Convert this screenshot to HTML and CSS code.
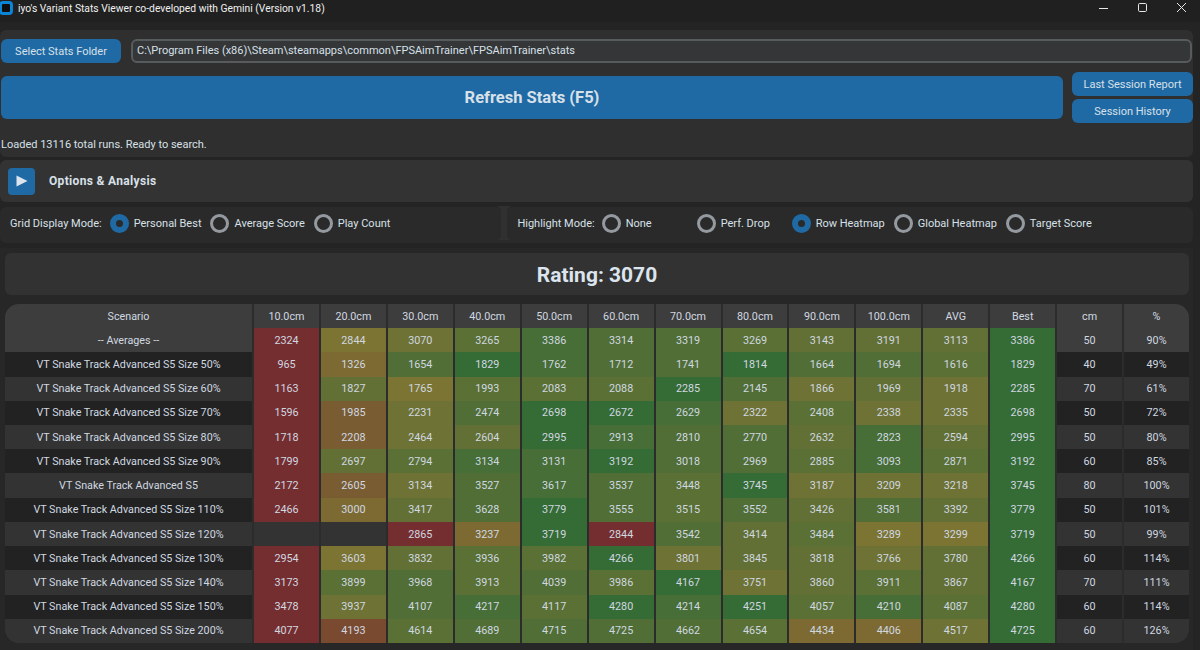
FILE: index.html
```html
<!DOCTYPE html>
<html lang="en">
<head>
<meta charset="utf-8">
<title>iyo's Variant Stats Viewer</title>
<link rel="stylesheet" href="styles.css">
</head>
<body>
<header class="titlebar">
  <div class="title-left"><span class="app-icon"></span><span class="app-title">iyo's Variant Stats Viewer co-developed with Gemini (Version v1.18)</span></div>
  <div class="win-controls">
    <svg class="win-btn" width="12" height="12" viewBox="0 0 12 12"><path d="M1 6.5H10" stroke="#e8e8e8" fill="none"/></svg>
    <svg class="win-btn" width="12" height="12" viewBox="0 0 12 12"><rect x="1.5" y="1.5" width="8" height="8" rx="1.2" stroke="#e8e8e8" fill="none"/></svg>
    <svg class="win-btn" width="12" height="12" viewBox="0 0 12 12"><path d="M1 1L10 10M10 1L1 10" stroke="#e8e8e8" fill="none"/></svg>
  </div>
</header>
<section class="panel top-panel">
  <div class="folder-row">
    <button class="btn folder-btn">Select Stats Folder</button>
    <div class="path-entry">C:\Program Files (x86)\Steam\steamapps\common\FPSAimTrainer\FPSAimTrainer\stats</div>
  </div>
  <div class="action-row">
    <button class="btn refresh-btn">Refresh Stats (F5)</button>
    <div class="side-btns">
      <button class="btn side-btn">Last Session Report</button>
      <button class="btn side-btn">Session History</button>
    </div>
  </div>
  <div class="status">Loaded 13116 total runs. Ready to search.</div>
</section>
<section class="options-panel">
  <button class="toggle"><svg width="12" height="12" viewBox="0 0 12 12"><path d="M0.5 0.5L11.5 6L0.5 11.5Z" fill="#dce4ee"/></svg></button>
  <span class="options-title">Options &amp; Analysis</span>
</section>
<section class="radio-row">
  <span class="group-label first">Grid Display Mode:</span>
  <label class="radio on"><i></i>Personal Best</label>
  <label class="radio"><i></i>Average Score</label>
  <label class="radio"><i></i>Play Count</label>
  <svg class="divider" width="14" height="34" viewBox="0 0 14 34"><path d="M0 0H14L10 3V31L14 34H0L4 31V3Z" fill="#303030"/></svg>
  <span class="group-label">Highlight Mode:</span>
  <label class="radio wide"><i></i>None</label>
  <label class="radio wide"><i></i>Perf. Drop</label>
  <label class="radio on"><i></i>Row Heatmap</label>
  <label class="radio"><i></i>Global Heatmap</label>
  <label class="radio"><i></i>Target Score</label>
</section>
<main class="results">
  <div class="rating">Rating: 3070</div>
  <div class="grid">
    <div class="c hd">Scenario</div><div class="c hd">10.0cm</div><div class="c hd">20.0cm</div><div class="c hd">30.0cm</div><div class="c hd">40.0cm</div><div class="c hd">50.0cm</div><div class="c hd">60.0cm</div><div class="c hd">70.0cm</div><div class="c hd">80.0cm</div><div class="c hd">90.0cm</div><div class="c hd">100.0cm</div><div class="c hd">AVG</div><div class="c hd">Best</div><div class="c hd">cm</div><div class="c hd">%</div>

    <div class="c hd">-- Averages --</div><div class="c h0">2324</div><div class="c h4">2844</div><div class="c h5">3070</div><div class="c h7">3265</div><div class="c h9">3386</div><div class="c h8">3314</div><div class="c h8">3319</div><div class="c h7">3269</div><div class="c h6">3143</div><div class="c h6">3191</div><div class="c h6">3113</div><div class="c h10">3386</div><div class="c hd">50</div><div class="c hd">90%</div>

    <div class="c dk">VT Snake Track Advanced S5 Size 50%</div><div class="c h0">965</div><div class="c h3">1326</div><div class="c h8">1654</div><div class="c h10">1829</div><div class="c h9">1762</div><div class="c h8">1712</div><div class="c h8">1741</div><div class="c h10">1814</div><div class="c h8">1664</div><div class="c h8">1694</div><div class="c h7">1616</div><div class="c h10">1829</div><div class="c dk">40</div><div class="c dk">49%</div>

    <div class="c lt">VT Snake Track Advanced S5 Size 60%</div><div class="c h0">1163</div><div class="c h6">1827</div><div class="c h4">1765</div><div class="c h7">1993</div><div class="c h7">2083</div><div class="c h7">2088</div><div class="c h10">2285</div><div class="c h8">2145</div><div class="c h5">1866</div><div class="c h6">1969</div><div class="c h5">1918</div><div class="c h10">2285</div><div class="c lt">70</div><div class="c lt">61%</div>

    <div class="c dk">VT Snake Track Advanced S5 Size 70%</div><div class="c h0">1596</div><div class="c h2">1985</div><div class="c h5">2231</div><div class="c h8">2474</div><div class="c h10">2698</div><div class="c h10">2672</div><div class="c h9">2629</div><div class="c h5">2322</div><div class="c h7">2408</div><div class="c h5">2338</div><div class="c h5">2335</div><div class="c h10">2698</div><div class="c dk">50</div><div class="c dk">72%</div>

    <div class="c lt">VT Snake Track Advanced S5 Size 80%</div><div class="c h0">1718</div><div class="c h2">2208</div><div class="c h5">2464</div><div class="c h6">2604</div><div class="c h10">2995</div><div class="c h9">2913</div><div class="c h8">2810</div><div class="c h8">2770</div><div class="c h6">2632</div><div class="c h9">2823</div><div class="c h6">2594</div><div class="c h10">2995</div><div class="c lt">50</div><div class="c lt">80%</div>

    <div class="c dk">VT Snake Track Advanced S5 Size 90%</div><div class="c h0">1799</div><div class="c h6">2697</div><div class="c h7">2794</div><div class="c h9">3134</div><div class="c h9">3131</div><div class="c h10">3192</div><div class="c h8">3018</div><div class="c h8">2969</div><div class="c h7">2885</div><div class="c h9">3093</div><div class="c h7">2871</div><div class="c h10">3192</div><div class="c dk">60</div><div class="c dk">85%</div>

    <div class="c lt">VT Snake Track Advanced S5</div><div class="c h0">2172</div><div class="c h2">2605</div><div class="c h5">3134</div><div class="c h8">3527</div><div class="c h9">3617</div><div class="c h8">3537</div><div class="c h7">3448</div><div class="c h10">3745</div><div class="c h5">3187</div><div class="c h5">3209</div><div class="c h5">3218</div><div class="c h10">3745</div><div class="c lt">80</div><div class="c lt">100%</div>

    <div class="c dk">VT Snake Track Advanced S5 Size 110%</div><div class="c h0">2466</div><div class="c h3">3000</div><div class="c h6">3417</div><div class="c h8">3628</div><div class="c h10">3779</div><div class="c h8">3555</div><div class="c h7">3515</div><div class="c h8">3552</div><div class="c h6">3426</div><div class="c h8">3581</div><div class="c h6">3392</div><div class="c h10">3779</div><div class="c dk">50</div><div class="c dk">101%</div>

    <div class="c lt">VT Snake Track Advanced S5 Size 120%</div><div class="c lt"></div><div class="c lt"></div><div class="c h0">2865</div><div class="c h3">3237</div><div class="c h10">3719</div><div class="c h0">2844</div><div class="c h8">3542</div><div class="c h6">3414</div><div class="c h7">3484</div><div class="c h4">3289</div><div class="c h4">3299</div><div class="c h10">3719</div><div class="c lt">50</div><div class="c lt">99%</div>

    <div class="c dk">VT Snake Track Advanced S5 Size 130%</div><div class="c h0">2954</div><div class="c h4">3603</div><div class="c h6">3832</div><div class="c h7">3936</div><div class="c h7">3982</div><div class="c h10">4266</div><div class="c h5">3801</div><div class="c h6">3845</div><div class="c h6">3818</div><div class="c h5">3766</div><div class="c h6">3780</div><div class="c h10">4266</div><div class="c dk">60</div><div class="c dk">114%</div>

    <div class="c lt">VT Snake Track Advanced S5 Size 140%</div><div class="c h0">3173</div><div class="c h7">3899</div><div class="c h8">3968</div><div class="c h7">3913</div><div class="c h8">4039</div><div class="c h7">3986</div><div class="c h10">4167</div><div class="c h5">3751</div><div class="c h6">3860</div><div class="c h7">3911</div><div class="c h6">3867</div><div class="c h10">4167</div><div class="c lt">70</div><div class="c lt">111%</div>

    <div class="c dk">VT Snake Track Advanced S5 Size 150%</div><div class="c h0">3478</div><div class="c h5">3937</div><div class="c h8">4107</div><div class="c h9">4217</div><div class="c h7">4117</div><div class="c h10">4280</div><div class="c h9">4214</div><div class="c h10">4251</div><div class="c h7">4057</div><div class="c h9">4210</div><div class="c h7">4087</div><div class="c h10">4280</div><div class="c dk">60</div><div class="c dk">114%</div>

    <div class="c lt">VT Snake Track Advanced S5 Size 200%</div><div class="c h0">4077</div><div class="c h1">4193</div><div class="c h7">4614</div><div class="c h8">4689</div><div class="c h8">4715</div><div class="c h8">4725</div><div class="c h8">4662</div><div class="c h7">4654</div><div class="c h3">4434</div><div class="c h3">4406</div><div class="c h5">4517</div><div class="c h10">4725</div><div class="c lt">60</div><div class="c lt">126%</div>
  </div>
</main>
</body>
</html>
```
FILE: styles.css
```css
* { box-sizing: border-box; }
html, body { margin: 0; padding: 0; height: 650px; overflow: hidden; }
body { width: 1200px; background: #242424; color: #d8e0e8; font-family: Roboto, "Liberation Sans", sans-serif; font-size: 11px; display: flex; flex-direction: column; }

.titlebar { height: 22px; flex: none; margin-bottom: 8px; padding-bottom: 6px; background: #202020; display: flex; justify-content: space-between; align-items: center; }
.title-left { display: flex; align-items: center; gap: 5px; }
.app-icon { width: 14px; height: 14px; margin-left: -1px; border: 3px solid #0b84d6; border-radius: 4px; background: #0e0e0e; }
.app-title { font-size: 10.3px; color: #f0f0f0; }
.win-controls { display: flex; gap: 27px; padding-right: 12px; }
.win-btn { display: block; }

.btn { border: 0; border-radius: 6px; background: #1f6aa5; color: #d8e0e8; font-family: inherit; font-size: 11px; padding: 0; }

.panel { width: 1193px; background: #2f2f2f; border-radius: 6px; }
.top-panel { height: 127px; flex: none; padding: 9px 0 0 1px; display: flex; flex-direction: column; }
.folder-row { display: flex; gap: 10px; height: 24px; flex: none; }
.folder-btn { width: 120px; }
.path-entry { flex: 1; margin-right: 1px; background: #343638; border: 2px solid #565b5e; border-radius: 6px; padding-left: 4px; line-height: 20px; }
.action-row { display: flex; gap: 9px; margin-top: 9px; height: 51px; flex: none; }
.refresh-btn { flex: 1; height: 43px; margin-top: 4px; font-size: 16.5px; font-weight: 700; }
.side-btns { display: flex; flex-direction: column; gap: 3px; width: 121px; }
.side-btn { height: 24px; }
.status { margin-top: 15px; line-height: 14px; }

.options-panel { width: 1193px; height: 42px; flex: none; margin-top: 3px; background: #333333; border-radius: 6px; display: flex; align-items: center; padding-left: 8px; }
.toggle { width: 27px; height: 27px; border: 0; border-radius: 4px; background: #1f6aa5; padding: 0; display: flex; align-items: center; justify-content: center; }
.options-title { margin-left: 14px; font-size: 12px; font-weight: 700; letter-spacing: 0.33px; }

.radio-row { width: 1193px; height: 36px; flex: none; margin-top: 5px; padding: 0 0 4px 10px; background: #2a2a2a; border-radius: 6px; display: flex; align-items: center; }
.group-label { margin-right: 7px; }
.group-label.first { margin-right: 8px; }
.radio { display: flex; align-items: center; gap: 5px; margin-right: 9px; white-space: nowrap; }
.radio i { width: 19px; height: 19px; border-radius: 50%; border: 3px solid #949a9f; }
.radio.on i { border: 6px solid #1f6aa5; }
.radio.wide { width: 86px; }
.divider { display: block; margin-left: 98px; margin-right: 6px; }

.results { width: 1193px; flex: 1; margin-top: 5px; padding: 5px 0 0 5px; background: #272727; display: flex; flex-direction: column; }
.rating { width: 1184px; height: 42px; flex: none; padding-top: 1px; background: #323232; border-radius: 6px; font-size: 21px; font-weight: 700; color: #dce4ee; display: flex; align-items: center; justify-content: center; }
.grid { width: 1184px; height: 339px; flex: none; margin-top: 9px; border-radius: 14px; overflow: hidden; display: grid; grid-template-columns: 247px repeat(14, 1fr); grid-template-rows: repeat(14, 1fr); column-gap: 2px; background: #2c2c2c; }
.c { display: flex; align-items: center; justify-content: center; font-size: 10.75px; color: #d0d8e0; white-space: nowrap; }
.hd { background: #3d3d3d; }
.dk { background: #222222; }
.lt { background: #333333; }
.h0 { background: #752e30; }
.h1 { background: #7a4a30; }
.h2 { background: #7a5c33; }
.h3 { background: #7d6a33; }
.h4 { background: #7c7433; }
.h5 { background: #6e7234; }
.h6 { background: #637035; }
.h7 { background: #5a7035; }
.h8 { background: #506e36; }
.h9 { background: #466e36; }
.h10 { background: #356b35; }
```
